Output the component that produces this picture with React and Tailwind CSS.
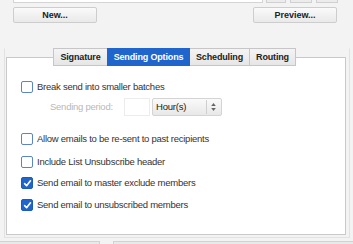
import React from 'react'

const FONT = { fontFamily: '"Liberation Sans", Arial, sans-serif' }

function Check({ checked }) {
  if (checked) {
    return (
      <span className="w-[12px] h-[12px] rounded-[2px] bg-[#1f65cc] border border-[#1a5bbd] flex items-center justify-center shrink-0">
        <svg width="9" height="9" viewBox="0 0 10 10">
          <path d="M1.8 5.2 L4 7.5 L8.3 2" fill="none" stroke="#fff" strokeWidth="1.8" strokeLinecap="round" strokeLinejoin="round" />
        </svg>
      </span>
    )
  }
  return <span className="w-[12px] h-[12px] rounded-[2px] bg-white border border-[#5a86c8] shrink-0" />
}

function Row({ checked, label, className = '' }) {
  return (
    <div className={`flex items-center h-[12px] ${className}`}>
      <Check checked={checked} />
      <span className="ml-[4px] text-[9.5px] tracking-[-0.25px] text-[#333] leading-none whitespace-nowrap">{label}</span>
    </div>
  )
}

const TABS = ['Signature', 'Sending Options', 'Scheduling', 'Routing']
const TAB_W = ['w-[54px]', 'w-[83px]', 'w-[60px]', 'w-[46px]']

export default function App() {
  return (
    <div className="w-[353px] h-[244px] bg-[#f3f3f3] overflow-hidden" style={FONT}>
      {/* top strip */}
      <div className="flex h-[3px]">
        <div className="ml-[13px] w-[250px] bg-white border-x border-b border-[#d4d4d4]" />
        <div className="ml-[3px] w-[20px] bg-[#ececec] border-x border-b border-[#d0d0d0]" />
        <div className="ml-[4px] w-[22px] bg-[#ececec] border-x border-b border-[#d0d0d0]" />
        <div className="ml-[4px] w-[22px] bg-[#ececec] border-x border-b border-[#d0d0d0]" />
      </div>

      {/* buttons */}
      <div className="flex justify-between pl-[13px] pr-[16px] mt-[4px]">
        <button className="w-[84px] h-[16px] rounded-[2px] border border-[#cdcdcd] bg-gradient-to-b from-[#fafafa] to-[#e9e9e9] text-[9px] font-bold text-[#222] leading-none">
          New...
        </button>
        <button className="w-[84px] h-[16px] rounded-[2px] border border-[#cdcdcd] bg-gradient-to-b from-[#fafafa] to-[#e9e9e9] text-[9px] font-bold text-[#222] leading-none">
          Preview...
        </button>
      </div>

      {/* frame */}
      <div className="mt-[25px] mx-[4px] w-[346px] h-[190px] border border-t-transparent border-[#e2e2e2] relative">
        {/* tabs */}
        <div className="flex ml-[48px] relative z-10 -mt-[1px]">
          {TABS.map((t, i) => (
            <div
              key={t}
              className={`${TAB_W[i]} h-[18px] flex items-center justify-center text-[9px] tracking-[-0.15px] font-bold leading-none ${
                i === 1
                  ? 'bg-[#1f65cc] text-white border border-[#1f65cc]'
                  : 'bg-gradient-to-b from-[#f4f4f4] to-[#e6e6e6] text-[#222] border border-[#c6c6c6]'
              } ${i > 1 ? 'border-l-0' : ''} ${i === 0 ? 'border-r-0' : ''}`}
            >
              {t}
            </div>
          ))}
        </div>

        {/* panel */}
        <div className="-mt-[9px] ml-[1px] w-[340px] h-[178px] bg-white border border-[#c9c9c9] pl-[14px] pt-[23px]">
          <Row label="Break send into smaller batches" />
          <div className="flex items-center mt-[5px] h-[18px]">
            <span className="ml-[29px] w-[74px] text-[9.5px] tracking-[-0.25px] text-[#b8b8b8] leading-none">Sending period:</span>
            <span className="w-[26px] h-[18px] bg-white border border-[#ececec]" />
            <div className="ml-[2px] w-[70px] h-[18px] rounded-[2px] border border-[#d4d4d4] bg-gradient-to-b from-[#fafafa] to-[#e8e8e8] flex items-center">
              <span className="pl-[3px] text-[9.5px] tracking-[-0.2px] text-[#222] leading-none flex-1">Hour(s)</span>
              <span className="w-px h-[14px] bg-[#cfcfcf]" />
              <svg width="13" height="14" viewBox="0 0 13 14" className="mr-[1px]">
                <path d="M6.5 3 L8.8 6 L4.2 6 Z" fill="#666" />
                <path d="M6.5 11 L8.8 8 L4.2 8 Z" fill="#666" />
              </svg>
            </div>
          </div>
          <Row className="mt-[17px]" label="Allow emails to be re-sent to past recipients" />
          <Row className="mt-[11px]" label="Include List Unsubscribe header" />
          <Row className="mt-[9px]" checked label="Send email to master exclude members" />
          <Row className="mt-[10px]" checked label="Send email to unsubscribed members" />
        </div>
      </div>

      {/* bottom controls */}
      <div className="flex mt-[3px] h-[6px]">
        <div className="w-[100px] bg-[#e9e9e9] border-t border-r border-[#d2d2d2]" />
        <div className="ml-[13px] flex-1 bg-[#e9e9e9] border-t border-l border-[#d2d2d2]" />
      </div>
    </div>
  )
}
